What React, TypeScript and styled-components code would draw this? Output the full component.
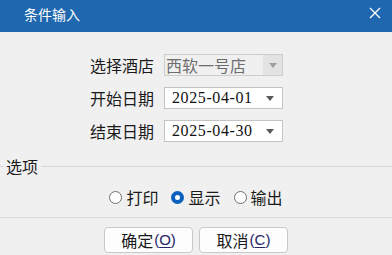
import React from "react";
import styled, { createGlobalStyle } from "styled-components";

const GlobalStyle = createGlobalStyle`
  html, body {
    margin: 0;
    padding: 0;
    background: #f0f0f0;
  }
  body {
    font-family: "Noto Sans CJK SC", "Noto Sans", sans-serif;
    color: #1a1a1a;
  }
`;

const Window = styled.div`
  width: 392px;
  height: 255px;
  background: #f0f0f0;
  display: flex;
  flex-direction: column;
  overflow: hidden;
`;

const TitleBar = styled.div`
  height: 32px;
  box-sizing: border-box;
  flex-shrink: 0;
  background: #1f68b0;
  color: #ffffff;
  display: flex;
  align-items: center;
  justify-content: space-between;
  padding: 0 11px 5px 24px;
  font-size: 14px;
  line-height: 1;
`;

const CloseButton = styled.div`
  width: 12px;
  height: 12px;
  display: flex;
  margin-top: -2px;
`;

const Form = styled.div`
  display: grid;
  grid-template-columns: 64px 119px;
  column-gap: 10px;
  row-gap: 11px;
  align-items: center;
  padding: 22px 0 0 90px;
`;

const Label = styled.div`
  font-size: 16px;
  line-height: 22px;
  white-space: nowrap;
`;

const Select = styled.div<{ disabled?: boolean }>`
  height: 22px;
  box-sizing: border-box;
  border: 1px solid ${(p) => (p.disabled ? "#cccccc" : "#c4c4c4")};
  background: ${(p) => (p.disabled ? "#f0f0f0" : "#ffffff")};
  display: flex;
  align-items: center;
`;

const SelectText = styled.div<{ disabled?: boolean }>`
  flex: 1;
  padding-left: ${(p) => (p.disabled ? "1px" : "7px")};
  font-family: ${(p) =>
    p.disabled
      ? `"Noto Sans CJK SC", sans-serif`
      : `"Liberation Serif", "DejaVu Serif", serif`};
  font-size: 16px;
  letter-spacing: ${(p) => (p.disabled ? "0" : "0.6px")};
  line-height: 20px;
  color: ${(p) => (p.disabled ? "#6d6d6d" : "#111111")};
  white-space: nowrap;
`;

const ArrowBox = styled.div<{ disabled?: boolean }>`
  width: 19px;
  height: 20px;
  display: flex;
  align-items: center;
  justify-content: center;
  background: ${(p) => (p.disabled ? "#e3e3e3" : "transparent")};
  margin-right: ${(p) => (p.disabled ? "0" : "3px")};
`;

const Arrow = styled.div<{ disabled?: boolean }>`
  width: 0;
  height: 0;
  border-left: 4.5px solid transparent;
  border-right: 4.5px solid transparent;
  border-top: 5px solid ${(p) => (p.disabled ? "#a0a0a0" : "#5a5a5a")};
`;

const GroupHeader = styled.div`
  display: flex;
  align-items: center;
  gap: 3px;
  margin-top: 14px;
  height: 20px;
  font-size: 16px;
`;

const Rule = styled.div<{ grow?: boolean; w?: number }>`
  height: 1px;
  background: #d6d6d6;
  flex: ${(p) => (p.grow ? 1 : "none")};
  width: ${(p) => (p.w ? `${p.w}px` : "auto")};
`;

const GroupTitle = styled.span`
  line-height: 20px;
`;

const RadioRow = styled.div`
  display: flex;
  justify-content: center;
  gap: 13px;
  margin-top: 11px;
  height: 20px;
  align-items: center;
`;

const RadioItem = styled.label`
  display: flex;
  align-items: center;
  gap: 4px;
  font-size: 16px;
  line-height: 20px;
`;

const RadioDot = styled.span<{ checked?: boolean }>`
  width: 13px;
  height: 13px;
  box-sizing: border-box;
  border-radius: 50%;
  border: ${(p) => (p.checked ? "4px solid #0a60bd" : "1px solid #707070")};
  background: #ffffff;
  display: inline-block;
`;

const Separator = styled.div`
  height: 1px;
  background: #dadada;
  margin-top: 10px;
`;

const ButtonRow = styled.div`
  display: flex;
  justify-content: center;
  gap: 6px;
  margin-top: 9px;
`;

const Button = styled.button`
  width: 89px;
  height: 26px;
  box-sizing: border-box;
  border: 1px solid #c9c9c9;
  border-radius: 4px;
  background: #fdfdfd;
  font-family: "Noto Sans CJK SC", sans-serif;
  font-size: 16px;
  line-height: 22px;
  color: #1a1a1a;
  padding: 0;
  display: flex;
  align-items: center;
  justify-content: center;
`;

const Mnemonic = styled.span`
  color: #242466;
  font-family: "Liberation Sans", sans-serif;
  font-size: 15px;
  margin-left: 1px;
  u {
    text-decoration-thickness: 1px;
    text-underline-offset: 2px;
  }
`;

const fields = [
  { label: "选择酒店", value: "西软一号店", disabled: true },
  { label: "开始日期", value: "2025-04-01", disabled: false },
  { label: "结束日期", value: "2025-04-30", disabled: false },
];

const options = [
  { label: "打印", checked: false },
  { label: "显示", checked: true },
  { label: "输出", checked: false },
];

export default function App() {
  return (
    <Window>
      <GlobalStyle />
      <TitleBar>
        <span>条件输入</span>
        <CloseButton>
          <svg width="12" height="12" viewBox="0 0 12 12">
            <path d="M1 1 L11 11 M11 1 L1 11" stroke="#ffffff" strokeWidth="1.3" />
          </svg>
        </CloseButton>
      </TitleBar>
      <Form>
        {fields.map((f) => (
          <React.Fragment key={f.label}>
            <Label>{f.label}</Label>
            <Select disabled={f.disabled}>
              <SelectText disabled={f.disabled}>{f.value}</SelectText>
              <ArrowBox disabled={f.disabled}>
                <Arrow disabled={f.disabled} />
              </ArrowBox>
            </Select>
          </React.Fragment>
        ))}
      </Form>
      <GroupHeader>
        <Rule w={3} />
        <GroupTitle>选项</GroupTitle>
        <Rule grow />
      </GroupHeader>
      <RadioRow>
        {options.map((o) => (
          <RadioItem key={o.label}>
            <RadioDot checked={o.checked} />
            {o.label}
          </RadioItem>
        ))}
      </RadioRow>
      <Separator />
      <ButtonRow>
        <Button>
          确定
          <Mnemonic>
            (<u>O</u>)
          </Mnemonic>
        </Button>
        <Button>
          取消
          <Mnemonic>
            (<u>C</u>)
          </Mnemonic>
        </Button>
      </ButtonRow>
    </Window>
  );
}
